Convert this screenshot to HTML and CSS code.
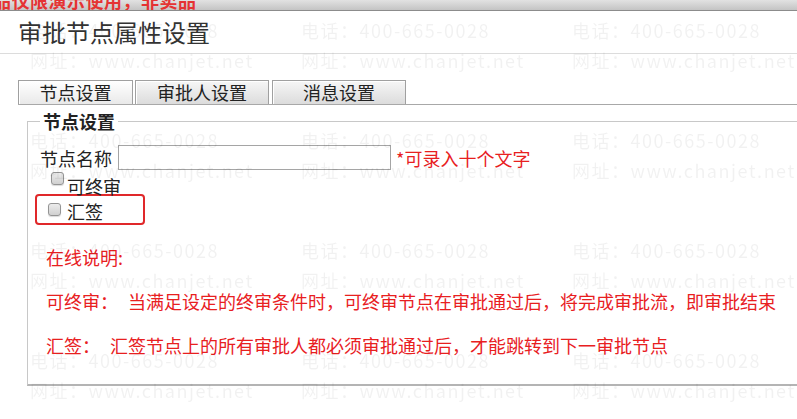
FILE: index.html
```html
<!DOCTYPE html>
<html lang="zh-CN">
<head>
    <meta charset="UTF-8">
    <title>审批节点属性设置</title>
    <link rel="stylesheet" href="styles.css">
</head>
<body>
    <div class="topbar"><span class="demo-note">本产品仅限演示使用，非卖品</span></div>
    <h1 class="title">审批节点属性设置</h1>

    <div class="tabs">
        <div class="tab tab-node active">节点设置</div>
        <div class="tab tab-approver">审批人设置</div>
        <div class="tab tab-message">消息设置</div>
    </div>

    <fieldset class="panel">
        <legend>节点设置</legend>
        <div class="field-row">
            <label for="nodeName">节点名称</label>
            <input type="text" id="nodeName" class="name-input">
            <span class="hint">*可录入十个文字</span>
        </div>
        <div class="check-row">
            <span class="checkbox"></span>
            <span class="check-label">可终审</span>
        </div>
        <div class="check-row marked">
            <span class="checkbox"></span>
            <span class="check-label">汇签</span>
        </div>
        <div class="help">
            在线说明:<br><br>
            可终审：<span class="gap"></span>当满足设定的终审条件时，可终审节点在审批通过后，将完成审批流，即审批结束<br><br>
            汇签：<span class="gap"></span>汇签节点上的所有审批人都必须审批通过后，才能跳转到下一审批节点
        </div>
    </fieldset>

    <!-- demo watermark -->
    <div class="watermark">
        <div>电话：400-665-0028<br>网址：www.chanjet.net</div>
        <div>电话：400-665-0028<br>网址：www.chanjet.net</div>
        <div>电话：400-665-0028<br>网址：www.chanjet.net</div>
        <div>电话：400-665-0028<br>网址：www.chanjet.net</div>
        <div>电话：400-665-0028<br>网址：www.chanjet.net</div>
        <div>电话：400-665-0028<br>网址：www.chanjet.net</div>
        <div>电话：400-665-0028<br>网址：www.chanjet.net</div>
        <div>电话：400-665-0028<br>网址：www.chanjet.net</div>
        <div>电话：400-665-0028<br>网址：www.chanjet.net</div>
        <div>电话：400-665-0028<br>网址：www.chanjet.net</div>
        <div>电话：400-665-0028<br>网址：www.chanjet.net</div>
        <div>电话：400-665-0028<br>网址：www.chanjet.net</div>
    </div>
</body>
</html>
```

FILE: styles.css
```css
* {
    box-sizing: border-box;
}

body {
    margin: 0;
    overflow: hidden;
    background-color: #fff;
    color: #333;
    font-family: "Noto Sans CJK SC", "Noto Sans", sans-serif;
    font-size: 18px;
}

.topbar {
    height: 11px;
    overflow: hidden;
    background: linear-gradient(#e2e2e2, #c4c4c4);
    border-bottom: 1px solid #8c8c8c;
    white-space: nowrap;
}

.demo-note {
    display: block;
    margin: -9px 0 0 -44px;
    line-height: 18px;
    letter-spacing: 0.5px;
    font-weight: bold;
    color: #e53333;
}

.title {
    margin: 0;
    height: 43px;
    padding-left: 18px;
    line-height: 42px;
    font-size: 24px;
    font-weight: normal;
    color: #333;
    border-bottom: 1px solid #dcdcdc;
}

.tabs {
    display: flex;
    margin: 26px 0 0 18px;
    border-bottom: 1px solid #a8a8a8;
}

.tab {
    height: 24px;
    line-height: 22px;
    text-align: center;
    color: #222;
    border: 1px solid #a0a0a0;
    border-bottom: none;
    background: linear-gradient(#f6f6f6, #dcdcdc);
    box-shadow: inset 1px 1px 0 #fff;
}

.tab.active {
    background: linear-gradient(#fff, #e9e9e9);
}

.tab-node {
    width: 115px;
}

.tab-approver {
    width: 134px;
    margin-left: 2px;
}

.tab-message {
    width: 134px;
    margin-left: 3px;
}

.panel {
    margin: 6px -20px 0 27px;
    padding: 0 0 28px 12px;
    border: 1px solid #c8c8c8;
    border-bottom: 2px solid #b4b4b4;
}

.panel legend {
    padding: 0 3px;
    line-height: 20px;
    font-weight: bold;
    color: #222;
}

.field-row {
    display: flex;
    align-items: center;
    height: 25px;
    margin-top: 14px;
    white-space: nowrap;
}

.field-row label {
    color: #222;
}

.name-input {
    width: 273px;
    height: 25px;
    margin: 0 5px 0 6px;
    padding: 2px 4px;
    border: 1px solid #a5a5a5;
    font-size: 16px;
}

.hint {
    color: #e8201f;
}

.check-row {
    display: flex;
    align-items: flex-start;
    height: 24px;
    padding-left: 11px;
    color: #222;
}

.check-row .checkbox {
    margin-top: 2px;
}

.check-label {
    margin-top: 6px;
    margin-left: 3px;
    line-height: 20px;
}

.check-row.marked {
    align-items: center;
    width: 110px;
    height: 31px;
    margin-left: -5px;
    padding-left: 11px;
    border: 2px solid #e0282a;
    border-radius: 4px;
}

.check-row.marked .checkbox {
    margin-top: 0;
}

.check-row.marked .check-label {
    margin: 3px 0 0 6px;
}

.checkbox {
    display: inline-block;
    width: 13px;
    height: 13px;
    border: 1px solid #949494;
    border-radius: 3px;
    background: linear-gradient(#ececec, #d0d0d0);
    box-shadow: 0 1px 1px rgba(0, 0, 0, 0.15);
}

.help {
    margin-top: 21px;
    padding-left: 6px;
    line-height: 22px;
    color: #e8201f;
    white-space: nowrap;
}

.gap {
    display: inline-block;
    width: 10px;
}

.watermark {
    position: fixed;
    top: 0;
    left: 0;
    right: 0;
    bottom: 0;
    overflow: hidden;
    display: grid;
    grid-template-columns: repeat(3, 271px);
    grid-auto-rows: 110px;
    padding: 15px 0 0 30px;
    font-size: 18px;
    line-height: 30px;
    letter-spacing: 1.5px;
    color: rgba(0, 0, 0, 0.055);
    white-space: nowrap;
    pointer-events: none;
}
```
